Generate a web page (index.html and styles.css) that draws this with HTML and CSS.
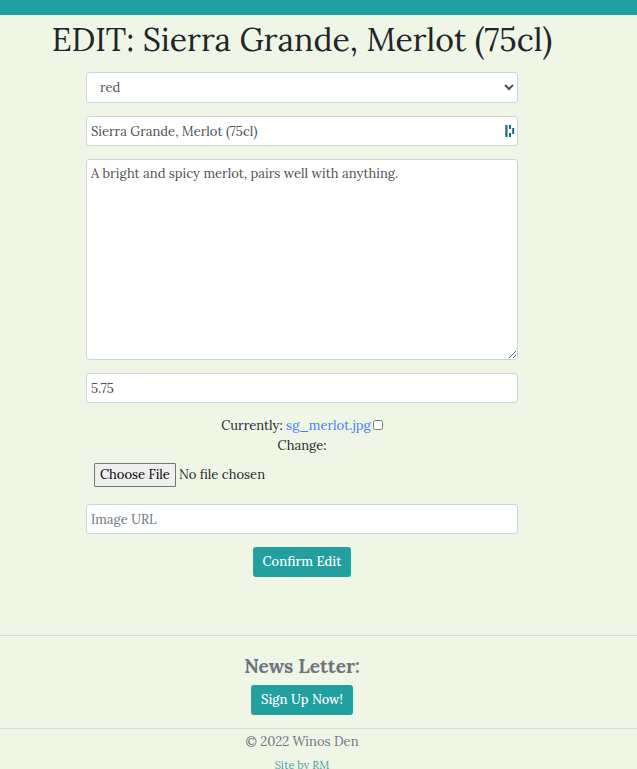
FILE: index.html
```html
<!DOCTYPE html>
<html lang="en">
<head>
<meta charset="utf-8">
<meta name="viewport" content="width=device-width, initial-scale=1">
<title>Edit product</title>
<link rel="stylesheet" href="styles.css">
</head>
<body>
<header class="topbar"></header>
<main class="content">
  <h1 class="title">EDIT: Sierra Grande, Merlot (75cl)</h1>
  <form class="form">
    <select class="control select" aria-label="Category">
      <option selected>red</option>
      <option>white</option>
    </select>
    <div class="field">
      <input class="control" type="text" aria-label="Name" value="Sierra Grande, Merlot (75cl)">
      <svg class="field-icon" viewBox="0 0 10 12" width="10" height="12" aria-hidden="true">
        <path fill="#176b7d" d="M.3 0H2.500V12H.3zM4 0h2v4H4zM4 8h2v4H4zM7.200 3h2v6h-2z"/>
      </svg>
    </div>
    <textarea class="control textarea" aria-label="Description">A bright and spicy merlot, pairs well with anything.</textarea>
    <input class="control" type="text" aria-label="Price" value="5.75">
    <div class="image-field">
      <div class="current"><span>Currently: <a href="#image">sg_merlot.jpg</a></span><input class="clear" type="checkbox" aria-label="Clear image"></div>
      <label class="change" for="image">Change:</label>
      <input class="file" id="image" type="file">
    </div>
    <input class="control" type="url" aria-label="Image URL" placeholder="Image URL">
    <button class="button" type="submit">Confirm Edit</button>
  </form>
</main>
<footer class="footer">
  <section class="newsletter">
    <h2 class="newsletter-title">News Letter:</h2>
    <button class="button" type="button">Sign Up Now!</button>
  </section>
  <div class="legal">
    <p class="copyright">© 2022 Winos Den</p>
    <a class="credit" href="#credit">Site by RM</a>
  </div>
</footer>
</body>
</html>
```
FILE: styles.css
```css
* { box-sizing: border-box; }

html { overflow: hidden; }

body {
  margin: 0;
  background: #f0f6e6;
  color: #212529;
  font: 13px/20px Lora, "Liberation Serif", serif;
}

.topbar { height: 15px; background: #21a09f; }

.content { padding: 0 33px 58px 0; }

.title {
  margin: 0;
  padding: 1px 0 8px;
  font-size: 32px;
  line-height: 48px;
  font-weight: 400;
  text-align: center;
}

.form {
  display: flex;
  flex-direction: column;
  gap: 13px;
  margin: 0 86px;
}

.control {
  display: block;
  width: 100%;
  height: 30px;
  margin: 0;
  padding: 4px;
  border: 1px solid #ced4da;
  border-radius: 3px;
  background: #fff;
  color: #495057;
  font: inherit;
}

.control::placeholder { color: #6c757d; opacity: 1; }

.select { height: 31px; padding: 4px 0 4px 9px; }

.field { position: relative; }

.field-icon { position: absolute; top: 9px; right: 3px; }

.textarea { height: 201px; resize: vertical; }

.image-field {
  display: flex;
  flex-direction: column;
  align-items: center;
  padding-bottom: 4px;
}

.current { display: flex; align-items: center; gap: 2px; }

.current a { color: #3d7bff; text-decoration: none; }

.clear { width: 10px; height: 10px; margin: 0 0 2px; }

.file {
  align-self: stretch;
  height: 24px;
  margin: 7px 8px 0;
  font: inherit;
}

.file::file-selector-button {
  height: 24px;
  margin: 0 3px 0 0;
  padding: 0 5px;
  border: 1px solid #767676;
  border-radius: 1px;
  background: #efefef;
  color: #000;
  font: inherit;
}

.button {
  align-self: center;
  height: 30px;
  padding: 0 10px;
  border: 0;
  border-radius: 3px;
  background: #21a09f;
  color: #fff;
  font: inherit;
  font-weight: 500;
}

.footer { color: #6c757d; text-align: center; }

.newsletter {
  padding: 18px 33px 13px 0;
  border-top: 1px solid #d6dccf;
}

.newsletter-title {
  margin: 0 0 7px;
  font-size: 19px;
  line-height: 24px;
}

.legal {
  padding: 3px 33px 0 0;
  border-top: 1px solid #d6dccf;
}

.copyright { margin: 0 0 3px; }

.credit { color: #4aa3a0; font-size: 11px; text-decoration: none; }
```
